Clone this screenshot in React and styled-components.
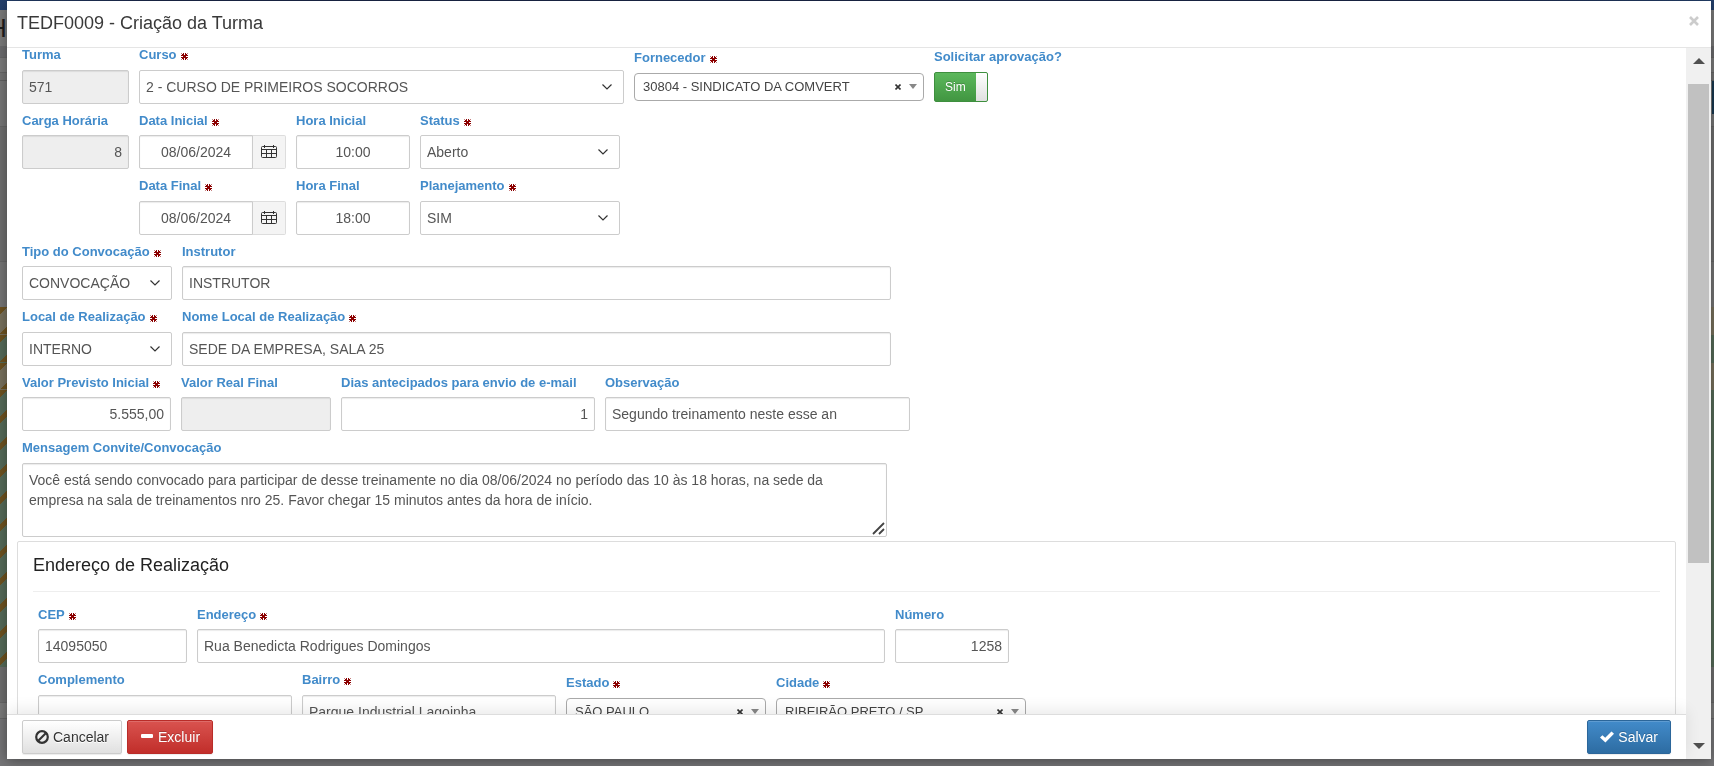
import React from "react";
import styled, { createGlobalStyle, css } from "styled-components";

const GlobalStyle = createGlobalStyle`
  *, *::before, *::after { box-sizing: border-box; }
  body { margin: 0; background: #757577; overflow: hidden; }
  body, input, select, textarea, button {
    font-family: "Liberation Sans", Arial, Helvetica, sans-serif;
    font-size: 14px;
  }
`;

/* ---------- dimmed page behind the dialog ---------- */

const Backdrop = styled.div`
  position: fixed;
  inset: 0;
  display: flex;
  flex-direction: column;
  background: #757577;
  overflow: hidden;
`;

const Band = styled.div`
  flex: none;
  display: flex;
  justify-content: space-between;
  height: ${(p) => p.$h}px;
  background: ${(p) => p.$bg};
  border-bottom: 1px solid ${(p) => p.$line || "transparent"};
`;

const NavBand = styled(Band)`
  background: linear-gradient(90deg, #24406b 0, #1b2749 160px, #1b2749 85%, #24406b 100%);
`;

const PageHeading = styled.span`
  margin-left: -12px;
  padding-top: 4px;
  color: #1d1d1d;
  font-size: 26px;
  font-weight: 400;
  line-height: 28px;
`;

const PageButton = styled.span`
  margin-left: auto;
  width: 2px;
  background: #17374f;
`;

const StripedBand = styled(Band)`
  background: repeating-linear-gradient(135deg, #6d5220 0, #6d5220 5px, transparent 5px, transparent 19px) left / 7px 100%
      no-repeat,
    ${(p) => p.$bg};
`;

/* ---------- dialog ---------- */

const Screen = styled.div`
  position: relative;
  height: 100vh;
  padding: 1px 3px 7px 7px;
`;

const Dialog = styled.div`
  display: flex;
  flex-direction: column;
  height: 100%;
  background: #fff;
  box-shadow: 0 2px 12px rgba(0, 0, 0, 0.35);
`;

const Header = styled.header`
  flex: none;
  display: flex;
  align-items: center;
  justify-content: space-between;
  height: 47px;
  padding: 0 12px 5px 10px;
  border-bottom: 1px solid #e5e5e5;
`;

const Title = styled.h1`
  margin: 0;
  padding-top: 2px;
  color: #393939;
  font-size: 18px;
  font-weight: 400;
  line-height: 26px;
`;

const CloseButton = styled.button`
  display: flex;
  padding: 0 0 2px;
  border: 0;
  background: none;
  color: #ccc;
`;

const Body = styled.div`
  flex: 1;
  display: flex;
  min-height: 0;
`;

const Main = styled.form`
  flex: 1;
  display: flex;
  flex-direction: column;
  min-width: 0;
`;

const Viewport = styled.div`
  flex: 1;
  min-height: 0;
  overflow: hidden;
  padding: 0 10px;
`;

const Rows = styled.div`
  display: flex;
  flex-direction: column;
  gap: 7px;
  padding: 0 5px;
  margin-top: ${(p) => p.$top}px;
`;

const Row = styled.div`
  display: flex;
  align-items: center;
  gap: 10px;
`;

const FieldBox = styled.div`
  flex: none;
  display: flex;
  flex-direction: column;
  align-items: stretch;
  gap: 5px;
  width: ${(p) => p.$w}px;
`;

const Label = styled.label`
  color: #428bca;
  font-size: 13px;
  font-weight: 700;
  line-height: 1.5;
  white-space: nowrap;
`;

const Spacer = styled.div`
  flex: none;
  width: ${(p) => p.$w}px;
`;

const control = css`
  width: 100%;
  height: 34px;
  margin: 0;
  padding: 0 6px;
  border: 1px solid #ccc;
  border-radius: 2px;
  background: #fff;
  color: #555;
  outline: 0;
`;

const Input = styled.input`
  ${control}
  text-align: ${(p) => p.$align || "left"};
  box-shadow: inset 0 1px 1px rgba(0, 0, 0, 0.08);
  &:disabled { background: #eee; color: #555; }
`;

const Overlay = styled.div`
  display: grid;
  align-items: center;
  & > * { grid-area: 1 / 1; }
`;

const Select = styled.select`
  ${control}
  appearance: none;
`;

const Chevron = styled.svg`
  justify-self: end;
  margin-right: 12px;
  pointer-events: none;
`;

const SearchSelect = styled.select`
  ${control}
  appearance: none;
  height: 28px;
  padding: 0 40px 0 8px;
  border-color: #aaa;
  border-radius: 4px;
  color: #444;
  font-size: 13px;
`;

const SearchTools = styled.span`
  justify-self: end;
  display: flex;
  align-items: center;
  gap: 8px;
  margin-right: 7px;
`;

const ClearButton = styled.button`
  display: flex;
  padding: 0;
  border: 0;
  background: none;
  color: #333;
`;

const DateGroup = styled.div`
  display: flex;
  & > input { flex: 1; min-width: 0; border-radius: 2px 0 0 2px; }
`;

const CalendarButton = styled.button`
  display: flex;
  align-items: center;
  justify-content: center;
  width: 34px;
  height: 34px;
  margin-left: -1px;
  padding: 0;
  border: 1px solid #ddd;
  border-left-color: #ccc;
  border-radius: 0 2px 2px 0;
  background: #f4f4f4;
  color: #333;
`;

const TextArea = styled.textarea`
  ${control}
  display: block;
  height: 74px;
  padding: 6px;
  line-height: 20px;
  resize: none;
  overflow: hidden;
  box-shadow: inset 0 1px 1px rgba(0, 0, 0, 0.08);
`;

const Grip = styled.svg`
  place-self: end;
  margin: 2px;
`;

const SwitchInput = styled.input`
  appearance: none;
  width: 54px;
  height: 30px;
  margin: 0;
  border: 1px solid #3e8f3e;
  border-radius: 2px;
  background: linear-gradient(#fff, #e0e0e0) right / 11px 100% no-repeat,
    linear-gradient(#5cb85c, #419641);
`;

const SwitchText = styled.span`
  padding-left: 11px;
  color: #fff;
  font-size: 12px;
  text-shadow: 0 -1px 0 rgba(0, 0, 0, 0.2);
  pointer-events: none;
`;

const Panel = styled.section`
  height: 400px;
  margin-top: 4px;
  padding: 12px 15px;
  border: 1px solid #ddd;
  border-radius: 2px;
`;

const PanelTitle = styled.h2`
  margin: 0;
  padding-bottom: 15px;
  border-bottom: 1px solid #eee;
  color: #222;
  font-size: 18px;
  font-weight: 400;
  line-height: 22px;
`;

const Footer = styled.footer`
  position: relative;
  flex: none;
  display: flex;
  align-items: center;
  gap: 5px;
  height: 45px;
  padding: 0 15px;
  border-top: 1px solid #ddd;
  background: #fff;
  box-shadow: 0 -4px 16px rgba(0, 0, 0, 0.09);
`;

const tones = {
  plain: css`
    border-color: #ccc;
    background: linear-gradient(#fff, #e0e0e0);
    color: #333;
    text-shadow: 0 1px 0 #fff;
  `,
  danger: css`
    border-color: #b92c28;
    background: linear-gradient(#d9534f, #c12e2a);
    color: #fff;
    text-shadow: 0 -1px 0 rgba(0, 0, 0, 0.2);
  `,
  primary: css`
    margin-left: auto;
    border-color: #2b669a;
    background: linear-gradient(#428bca, #2d6ca2);
    color: #fff;
    text-shadow: 0 -1px 0 rgba(0, 0, 0, 0.2);
  `,
};

const Button = styled.button`
  display: flex;
  align-items: center;
  justify-content: center;
  gap: 4px;
  height: 34px;
  padding: 0 12px;
  border: 1px solid;
  border-radius: 2px;
  ${(p) => tones[p.$tone]}
  box-shadow: inset 0 1px 0 rgba(255, 255, 255, 0.15), 0 1px 1px rgba(0, 0, 0, 0.08);
`;

const ScrollBar = styled.div`
  flex: none;
  display: flex;
  flex-direction: column;
  align-items: stretch;
  width: 25px;
  background: #f0f0f0;
`;

const ScrollArrow = styled.span`
  display: flex;
  justify-content: center;
  align-items: ${(p) => (p.$down ? "flex-end" : "flex-start")};
  height: 36px;
  padding: 10px 0;
`;

const ScrollTrack = styled.div`
  flex: 1;
  padding: 0 2px;
`;

const ScrollThumb = styled.div`
  height: 75%;
  background: #c1c1c1;
`;

/* ---------- drawings ---------- */

const Asterisk = () => (
  <svg width="7" height="7" viewBox="0 0 7 7" role="img" aria-label="obrigatório" stroke="#8b0000">
    <path d="M2.500 0v7M4.500 0v7M0 2.500h7M0 4.500h7M.5 .5l6 6M6.500 .5l-6 6" />
  </svg>
);

const Required = styled.span`
  display: inline-block;
  height: 7px;
  margin-left: 4px;
  vertical-align: -1px;
  line-height: 0;
`;

const CalendarIcon = () => (
  <svg width="16" height="14" viewBox="0 0 16 14" fill="none" stroke="currentColor" aria-hidden="true">
    <rect x=".5" y="1.500" width="15" height="11" rx="1" />
    <path d="M.5 4.500h15M.5 8.500h15M5.500 4.500v8M10.500 4.500v8" />
    <path d="M3.500 0v3M12.500 0v3" />
  </svg>
);

const CloseIcon = () => (
  <svg width="10" height="10" viewBox="0 0 10 10" stroke="currentColor" strokeWidth="2.6" aria-hidden="true">
    <path d="M1 1l8 8M9 1L1 9" />
  </svg>
);

const ClearIcon = () => (
  <svg width="6" height="6" viewBox="0 0 6 6" stroke="currentColor" strokeWidth="1.6" aria-hidden="true">
    <path d="M.5 .5l5 5M5.500 .5l-5 5" />
  </svg>
);

const BanIcon = () => (
  <svg width="14" height="14" viewBox="0 0 14 14" fill="none" stroke="currentColor" strokeWidth="2.2" aria-hidden="true">
    <circle cx="7" cy="7" r="5.800" />
    <path d="M3 11l8-8" />
  </svg>
);

const MinusIcon = () => (
  <svg width="14" height="14" viewBox="0 0 14 14" aria-hidden="true">
    <rect x="1" y="4" width="12" height="4" rx="1" fill="currentColor" />
  </svg>
);

const CheckIcon = () => (
  <svg width="14" height="14" viewBox="0 0 15 14" aria-hidden="true">
    <path d="M0 7.600L2.600 5l3 2.900L12.300 1 15 3.500 5.800 13z" fill="currentColor" />
  </svg>
);

const Triangle = ({ down }) => (
  <svg width="12" height="6" viewBox="0 0 12 6" aria-hidden="true">
    <path d={down ? "M0 0h12L6 6z" : "M0 6h12L6 0z"} fill="#505050" />
  </svg>
);

/* ---------- fields ---------- */

function Field({ id, label, required, w, children }) {
  return (
    <FieldBox $w={w}>
      <Label htmlFor={id}>
        {label}
        {required && (
          <Required>
            <Asterisk />
          </Required>
        )}
      </Label>
      {children}
    </FieldBox>
  );
}

function TextField({ id, label, required, w, value, align, disabled }) {
  return (
    <Field {...{ id, label, required, w }}>
      <Input id={id} defaultValue={value} $align={align} disabled={disabled} />
    </Field>
  );
}

function DateField({ id, label, required, w, value }) {
  return (
    <Field {...{ id, label, required, w }}>
      <DateGroup>
        <Input id={id} defaultValue={value} $align="center" />
        <CalendarButton type="button" aria-label="Abrir calendário">
          <CalendarIcon />
        </CalendarButton>
      </DateGroup>
    </Field>
  );
}

function SelectField({ id, label, required, w, value }) {
  return (
    <Field {...{ id, label, required, w }}>
      <Overlay>
        <Select id={id}>
          <option>{value}</option>
        </Select>
        <Chevron width="10" height="6" viewBox="0 0 10 6" fill="none" stroke="#333" strokeWidth="1.2">
          <path d="M.5 .5L5 5 9.500 .5" />
        </Chevron>
      </Overlay>
    </Field>
  );
}

function SearchField({ id, label, required, w, value }) {
  return (
    <Field {...{ id, label, required, w }}>
      <Overlay>
        <SearchSelect id={id}>
          <option>{value}</option>
        </SearchSelect>
        <SearchTools>
          <ClearButton type="button" aria-label="Limpar">
            <ClearIcon />
          </ClearButton>
          <svg width="8" height="5" viewBox="0 0 8 5" aria-hidden="true">
            <path d="M0 0h8L4 5z" fill="#888" />
          </svg>
        </SearchTools>
      </Overlay>
    </Field>
  );
}

const message =
  "Você está sendo convocado para participar de desse treinamente no dia 08/06/2024 no período das 10 às 18 horas, na sede da empresa na sala de treinamentos nro 25. Favor chegar 15 minutos antes da hora de início.";

export default function App() {
  return (
    <>
      <GlobalStyle />
      <Backdrop aria-hidden="true">
        <NavBand $h={10} />
        <Band $h={36} $bg="#7a7a7a">
          <PageHeading>H</PageHeading>
        </Band>
        <Band $h={12} $bg="#6b6b6d" $line="#666" />
        <Band $h={15} $bg="#7a7a7a" $line="#666" />
        <Band $h={8} $bg="#727272" $line="#606060" />
        <Band $h={34} $bg="#757575">
          <PageButton />
        </Band>
        <Band $h={12} $bg="#757575" $line="#666" />
        <Band $h={135} $bg="#6e6e6e" $line="#666" />
        <Band $h={45} $bg="#747474" />
        <StripedBand $h={28} $bg="#77705c" />
        <StripedBand $h={28} $bg="#556a58" />
        <StripedBand $h={27} $bg="#77705c" />
        <StripedBand $h={277} $bg="#556a58" />
        <Band $h={36} $bg="#6e6e6e" $line="#666" />
        <Band $h={16} $bg="#7a7a7a" $line="#666" />
      </Backdrop>
      <Screen>
        <Dialog role="dialog" aria-labelledby="titulo">
          <Header>
            <Title id="titulo">TEDF0009 - Criação da Turma</Title>
            <CloseButton type="button" aria-label="Fechar">
              <CloseIcon />
            </CloseButton>
          </Header>
          <Body>
            <Main onSubmit={(e) => e.preventDefault()}>
              <Viewport>
                <Rows $top={-3}>
                  <Row>
                    <TextField id="turma" label="Turma" w={107} value="571" disabled />
                    <SelectField id="curso" label="Curso" required w={485} value="2 - CURSO DE PRIMEIROS SOCORROS" />
                    <SearchField id="fornecedor" label="Fornecedor" required w={290} value="30804 - SINDICATO DA COMVERT" />
                    <Field id="aprovacao" label="Solicitar aprovação?" w={130}>
                      <Overlay>
                        <SwitchInput id="aprovacao" type="checkbox" defaultChecked />
                        <SwitchText>Sim</SwitchText>
                      </Overlay>
                    </Field>
                  </Row>
                  <Row>
                    <TextField id="carga" label="Carga Horária" w={107} value="8" align="right" disabled />
                    <DateField id="dataInicial" label="Data Inicial" required w={147} value="08/06/2024" />
                    <TextField id="horaInicial" label="Hora Inicial" w={114} value="10:00" align="center" />
                    <SelectField id="status" label="Status" required w={200} value="Aberto" />
                  </Row>
                  <Row>
                    <Spacer $w={107} />
                    <DateField id="dataFinal" label="Data Final" required w={147} value="08/06/2024" />
                    <TextField id="horaFinal" label="Hora Final" w={114} value="18:00" align="center" />
                    <SelectField id="planejamento" label="Planejamento" required w={200} value="SIM" />
                  </Row>
                  <Row>
                    <SelectField id="tipo" label="Tipo do Convocação" required w={150} value="CONVOCAÇÃO" />
                    <TextField id="instrutor" label="Instrutor" w={709} value="INSTRUTOR" />
                  </Row>
                  <Row>
                    <SelectField id="local" label="Local de Realização" required w={150} value="INTERNO" />
                    <TextField id="nomeLocal" label="Nome Local de Realização" required w={709} value="SEDE DA EMPRESA, SALA 25" />
                  </Row>
                  <Row>
                    <TextField id="previsto" label="Valor Previsto Inicial" required w={149} value="5.555,00" align="right" />
                    <TextField id="real" label="Valor Real Final" w={150} value="" disabled />
                    <TextField id="dias" label="Dias antecipados para envio de e-mail" w={254} value="1" align="right" />
                    <TextField id="observacao" label="Observação" w={305} value="Segundo treinamento neste esse an" />
                  </Row>
                  <Row>
                    <Field id="mensagem" label="Mensagem Convite/Convocação" w={865}>
                      <Overlay>
                        <TextArea id="mensagem" defaultValue={message} />
                        <Grip width="13" height="13" viewBox="0 0 13 13" stroke="#444" strokeWidth="1.8" aria-hidden="true">
                          <path d="M1 12L12 1M7 12l5-5" />
                        </Grip>
                      </Overlay>
                    </Field>
                  </Row>
                </Rows>
                <Panel>
                  <PanelTitle>Endereço de Realização</PanelTitle>
                  <Rows $top={13}>
                    <Row>
                      <TextField id="cep" label="CEP" required w={149} value="14095050" />
                      <TextField id="endereco" label="Endereço" required w={688} value="Rua Benedicta Rodrigues Domingos" />
                      <TextField id="numero" label="Número" w={114} value="1258" align="right" />
                    </Row>
                    <Row>
                      <TextField id="complemento" label="Complemento" w={254} value="" />
                      <TextField id="bairro" label="Bairro" required w={254} value="Parque Industrial Lagoinha" />
                      <SearchField id="estado" label="Estado" required w={200} value="SÃO PAULO" />
                      <SearchField id="cidade" label="Cidade" required w={250} value="RIBEIRÃO PRETO / SP" />
                    </Row>
                  </Rows>
                </Panel>
              </Viewport>
              <Footer>
                <Button type="button" $tone="plain">
                  <BanIcon />
                  Cancelar
                </Button>
                <Button type="button" $tone="danger">
                  <MinusIcon />
                  Excluir
                </Button>
                <Button type="submit" $tone="primary">
                  <CheckIcon />
                  Salvar
                </Button>
              </Footer>
            </Main>
            <ScrollBar aria-hidden="true">
              <ScrollArrow>
                <Triangle />
              </ScrollArrow>
              <ScrollTrack>
                <ScrollThumb />
              </ScrollTrack>
              <ScrollArrow $down>
                <Triangle down />
              </ScrollArrow>
            </ScrollBar>
          </Body>
        </Dialog>
      </Screen>
    </>
  );
}
